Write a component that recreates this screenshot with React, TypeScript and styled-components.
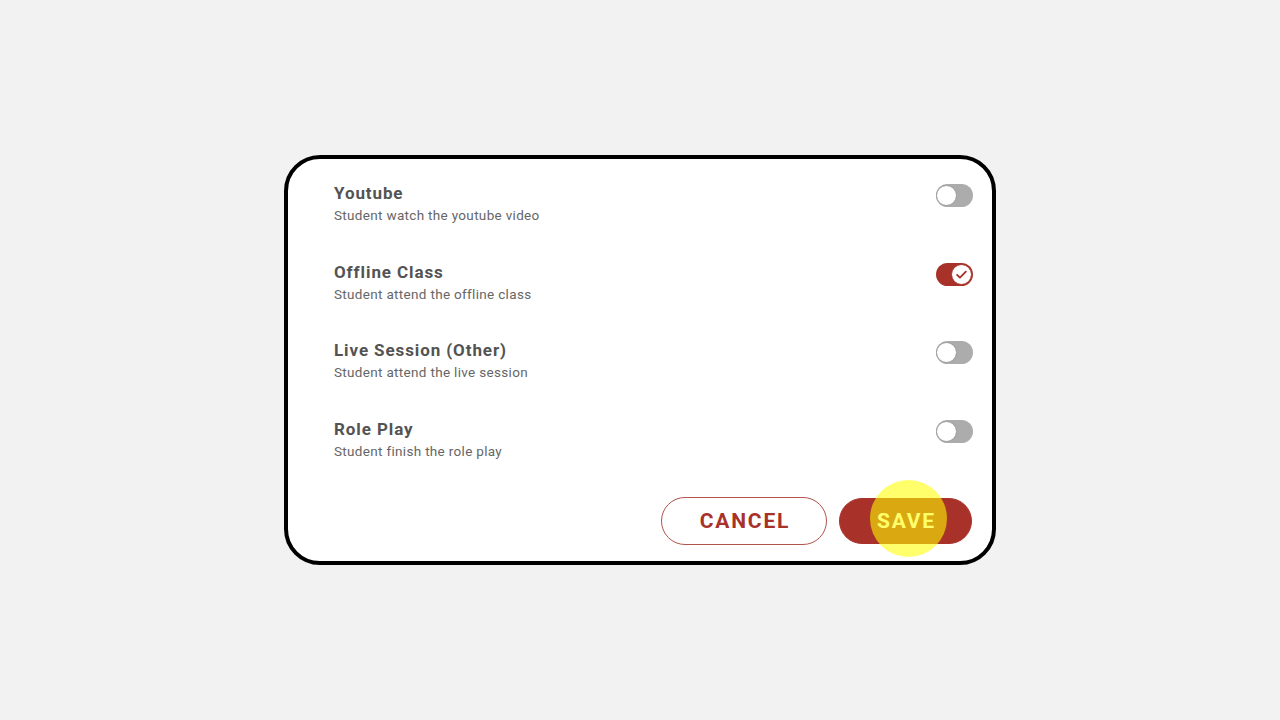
import React, { useState } from "react";
import styled, { createGlobalStyle } from "styled-components";

const Global = createGlobalStyle`
  html, body { margin: 0; padding: 0; background: #f2f2f2; }
  body { font-family: Roboto, "Noto Sans", Arial, sans-serif; }
`;

const Page = styled.div`
  width: 1280px;
  height: 720px;
  display: flex;
  align-items: center;
  justify-content: center;
  position: relative;
`;

const Card = styled.div`
  width: 712px;
  height: 410px;
  box-sizing: border-box;
  background: #fff;
  border: 4px solid #000;
  border-radius: 36px;
  padding: 24px 19px 16px 46px;
  display: flex;
  flex-direction: column;
`;

const List = styled.div`
  display: flex;
  flex-direction: column;
  gap: 37.5px;
`;

const Row = styled.div`
  display: flex;
  justify-content: space-between;
  align-items: flex-start;
`;

const Texts = styled.div`
  display: flex;
  flex-direction: column;
  gap: 3px;
`;

const Title = styled.div`
  font-size: 17px;
  line-height: 20px;
  font-weight: 700;
  color: #535353;
  letter-spacing: 0.9px;
`;

const Sub = styled.div`
  font-size: 13.5px;
  line-height: 18px;
  color: #666;
  letter-spacing: 0.32px;
`;

const Track = styled.button<{ $on: boolean }>`
  margin-top: 1px;
  width: 37px;
  height: 23px;
  border: none;
  padding: 0;
  border-radius: 12px;
  background: ${(p) => (p.$on ? "#a8322a" : "#acacac")};
  position: relative;
  cursor: pointer;
`;

const Knob = styled.span<{ $on: boolean }>`
  position: absolute;
  top: 1px;
  left: ${(p) => (p.$on ? "15px" : "0px")};
  width: 21px;
  height: 21px;
  box-sizing: border-box;
  border-radius: 50%;
  background: #fff;
  border: 1px solid ${(p) => (p.$on ? "#a8322a" : "#9a9a9a")};
  display: flex;
  align-items: center;
  justify-content: center;
`;

const Actions = styled.div`
  margin-top: auto;
  display: flex;
  justify-content: flex-end;
  gap: 12px;
  padding-right: 1px;
`;

const Btn = styled.button<{ $primary?: boolean }>`
  height: ${(p) => (p.$primary ? "46px" : "48px")};
  margin-top: ${(p) => (p.$primary ? "1px" : "0")};
  width: ${(p) => (p.$primary ? "133px" : "166px")};
  border-radius: 24px;
  box-sizing: border-box;
  font-family: Roboto, Arial, sans-serif;
  font-weight: 700;
  font-size: 21px;
  letter-spacing: 1.8px;
  padding: 0 0 0 2px;
  cursor: pointer;
  border: 1.5px solid ${(p) => (p.$primary ? "#a8322a" : "#b0544c")};
  background: ${(p) => (p.$primary ? "#a8322a" : "#fff")};
  color: ${(p) => (p.$primary ? "#fff" : "#a8322a")};
`;

const Click = styled.div`
  position: absolute;
  left: 870px;
  top: 480px;
  width: 77px;
  height: 77px;
  border-radius: 50%;
  background: rgba(255, 255, 0, 0.58);
  pointer-events: none;
`;

const items = [
  { t: "Youtube", s: "Student watch the youtube video", on: false },
  { t: "Offline Class", s: "Student attend the offline class", on: true },
  { t: "Live Session (Other)", s: "Student attend the live session", on: false },
  { t: "Role Play", s: "Student finish the role play", on: false },
];

export default function App() {
  const [state, setState] = useState(items.map((i) => i.on));
  return (
    <Page>
      <Global />
      <Card>
        <List>
          {items.map((it, i) => (
            <Row key={it.t}>
              <Texts>
                <Title>{it.t}</Title>
                <Sub>{it.s}</Sub>
              </Texts>
              <Track
                $on={state[i]}
                onClick={() => setState((s) => s.map((v, j) => (j === i ? !v : v)))}
              >
                <Knob $on={state[i]}>
                  {state[i] && (
                    <svg width="15" height="15" viewBox="0 0 24 24" fill="none">
                      <path d="M5 12.5l4.5 4.5L19 7.5" stroke="#a8322a" strokeWidth="3" strokeLinecap="round" strokeLinejoin="round" />
                    </svg>
                  )}
                </Knob>
              </Track>
            </Row>
          ))}
        </List>
        <Actions>
          <Btn>CANCEL</Btn>
          <Btn $primary>SAVE</Btn>
        </Actions>
      </Card>
      <Click />
    </Page>
  );
}
